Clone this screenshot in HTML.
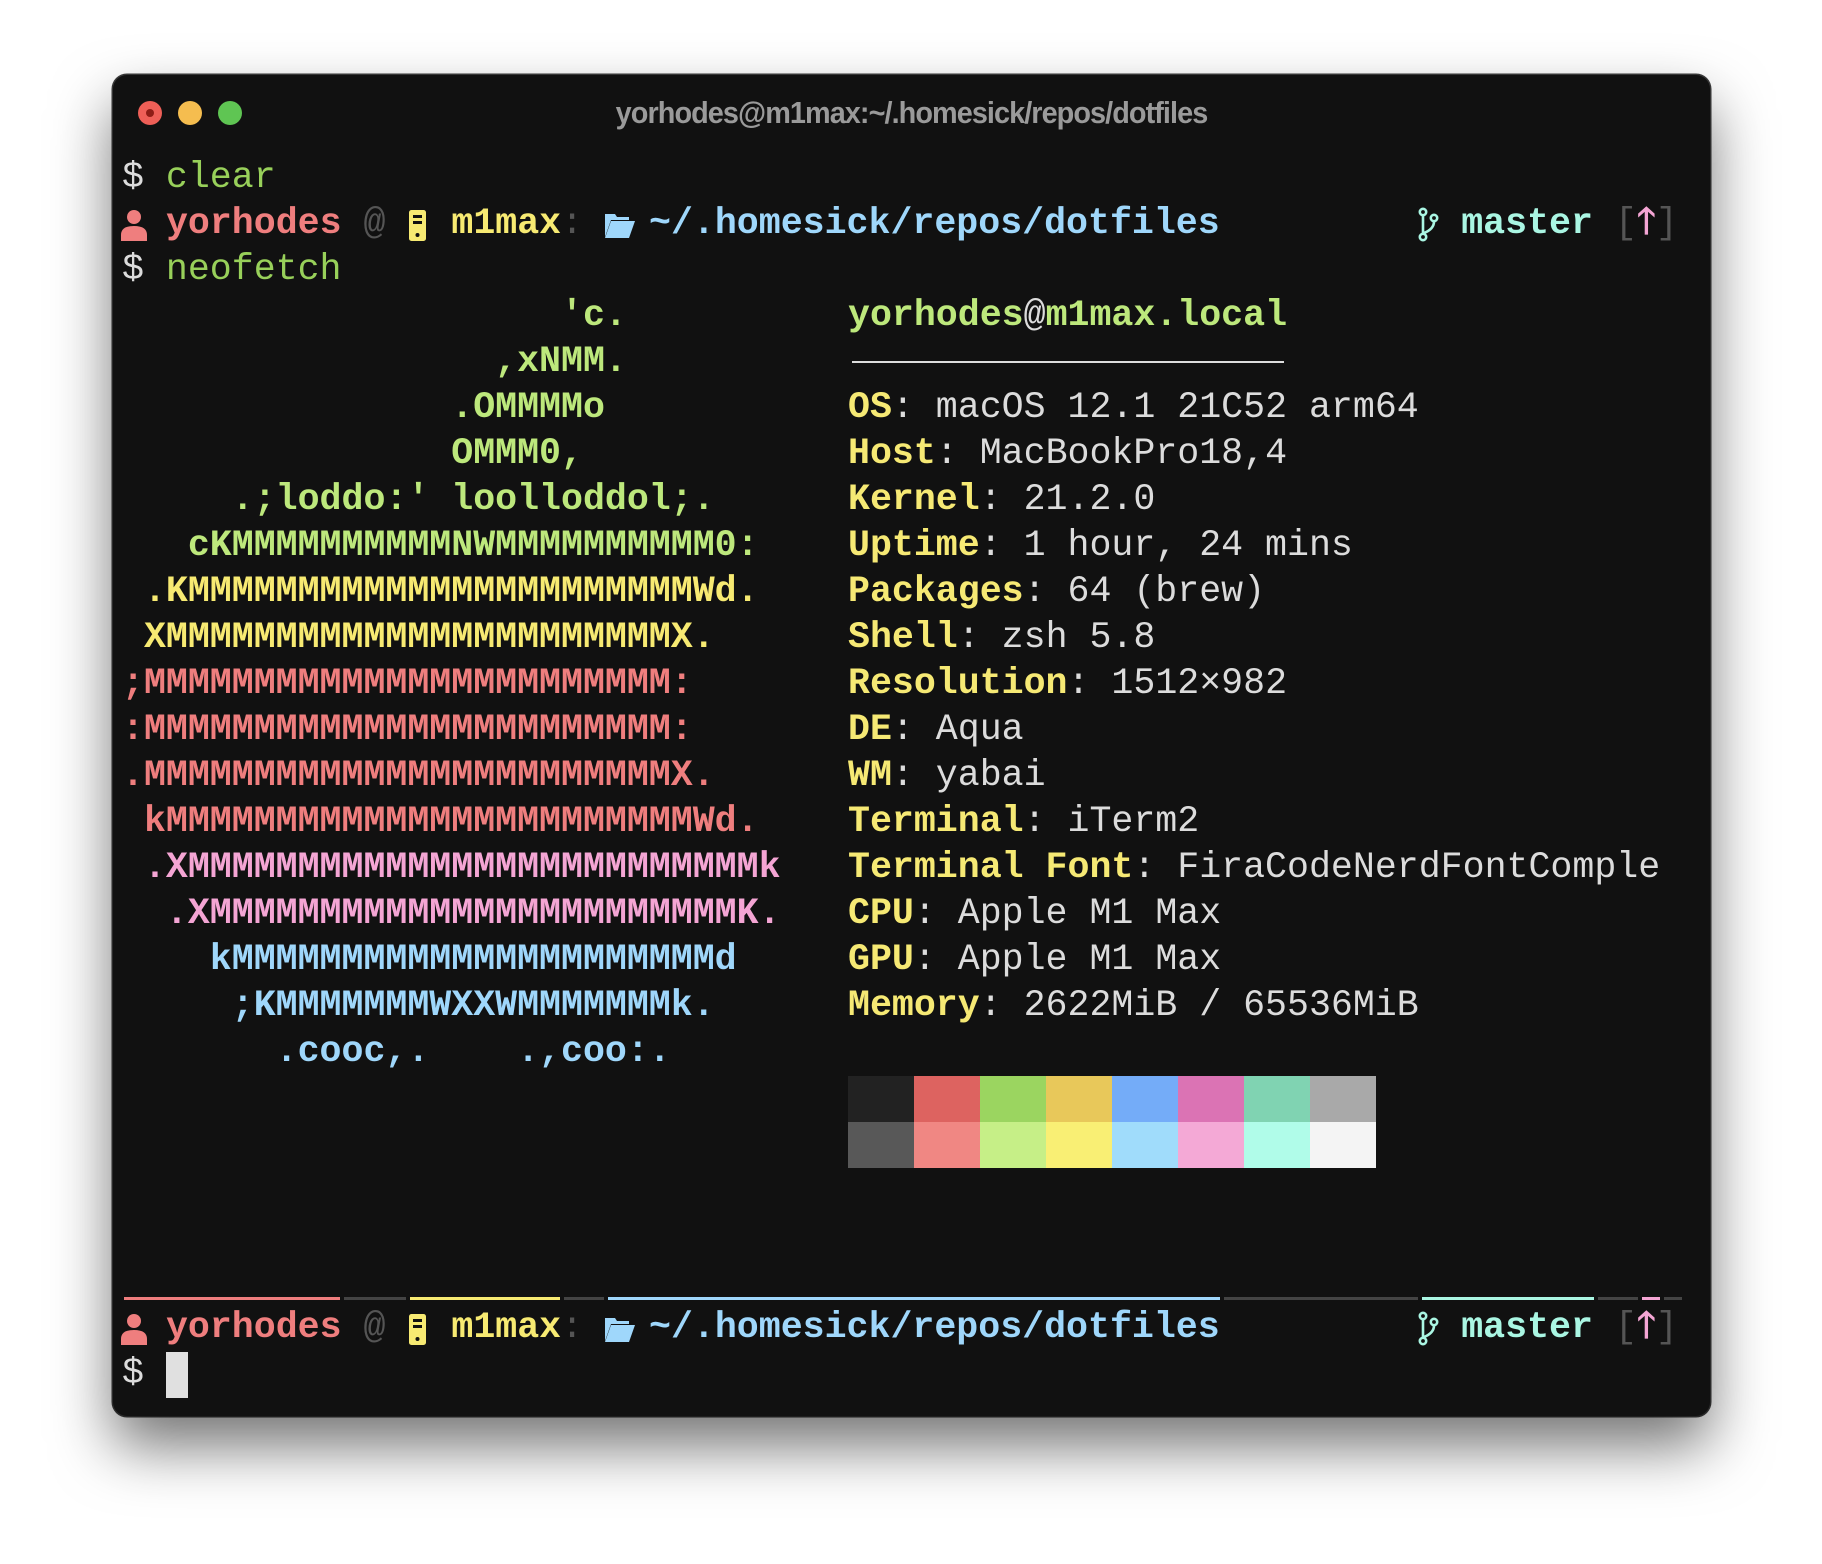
<!DOCTYPE html>
<html><head><meta charset="utf-8"><style>
html,body{margin:0;padding:0;background:#fff;width:1822px;height:1564px;overflow:hidden}
.win{position:absolute;left:113px;top:75px;width:1597px;height:1341px;background:#111111;border-radius:14px;box-shadow:0 30px 60px rgba(0,0,0,.55),0 0 0 1.5px #3a3a3a;}
.dot{position:absolute;top:101px;width:24px;height:24px;border-radius:50%}
.title{position:absolute;left:113px;width:1597px;top:95px;text-align:center;font:bold 31px "Liberation Sans",sans-serif;color:#9a9a9a;letter-spacing:-1px;transform:scaleX(.93)}
.t{position:absolute;top:155px;font-family:"Liberation Mono",monospace;font-size:36.6px;line-height:46px;color:#dcdcdc}
.t div{height:46px;white-space:pre}
b{font-weight:bold}
.g{color:#98d05a}.lg{color:#bde87c}.y{color:#f7ea72}.r{color:#ef7e7e}.p{color:#f4a5d4}.bl{color:#9fd7fb}.gr{color:#555}.cy{color:#aaf6e3}
.lb{color:#f6e974;font-weight:bold}
.ic{display:inline-block;width:22px;height:46px;vertical-align:top;position:relative}
.ic svg{position:absolute;left:0;top:0;overflow:visible}
.bar{position:absolute;top:1297px;height:3px}
.sw{position:absolute;width:66px;height:46px}
</style></head><body>
<div class="win"></div>
<div class="dot" style="left:138px;background:#ee5f57"><div style="position:absolute;left:8px;top:8px;width:8px;height:8px;border-radius:50%;background:#8e1d16"></div></div>
<div class="dot" style="left:178px;background:#f5bd4f"></div>
<div class="dot" style="left:218px;background:#5fc553"></div>
<div class="title">yorhodes@m1max:~/.homesick/repos/dotfiles</div>

<div style="position:absolute;left:852px;top:361px;width:432px;height:2px;background:#ddd"></div>

<div class="sw" style="left:848px;top:1076px;background:#222"></div>
<div class="sw" style="left:914px;top:1076px;background:#dd6360"></div>
<div class="sw" style="left:980px;top:1076px;background:#9bd560"></div>
<div class="sw" style="left:1046px;top:1076px;background:#e8c85a"></div>
<div class="sw" style="left:1112px;top:1076px;background:#74acf8"></div>
<div class="sw" style="left:1178px;top:1076px;background:#db73b4"></div>
<div class="sw" style="left:1244px;top:1076px;background:#80d3b2"></div>
<div class="sw" style="left:1310px;top:1076px;background:#a9a9a9"></div>
<div class="sw" style="left:848px;top:1122px;background:#585858"></div>
<div class="sw" style="left:914px;top:1122px;background:#f08783"></div>
<div class="sw" style="left:980px;top:1122px;background:#c6ef87"></div>
<div class="sw" style="left:1046px;top:1122px;background:#f9ef74"></div>
<div class="sw" style="left:1112px;top:1122px;background:#a0dcfb"></div>
<div class="sw" style="left:1178px;top:1122px;background:#f4a9d6"></div>
<div class="sw" style="left:1244px;top:1122px;background:#b0fce9"></div>
<div class="sw" style="left:1310px;top:1122px;background:#f4f4f4"></div>

<div class="bar" style="left:124px;width:216px;background:#ef7e7e"></div>
<div class="bar" style="left:344px;width:62px;background:#444"></div>
<div class="bar" style="left:410px;width:150px;background:#f7ea72"></div>
<div class="bar" style="left:564px;width:40px;background:#444"></div>
<div class="bar" style="left:608px;width:612px;background:#9fd7fb"></div>
<div class="bar" style="left:1224px;width:194px;background:#444"></div>
<div class="bar" style="left:1422px;width:172px;background:#aaf6e3"></div>
<div class="bar" style="left:1598px;width:40px;background:#444"></div>
<div class="bar" style="left:1642px;width:18px;background:#f4a5d4"></div>
<div class="bar" style="left:1664px;width:18px;background:#444"></div>

<div style="position:absolute;left:166px;top:1352px;width:22px;height:46px;background:#e0e0e0"></div>

<div class="t" style="left:122px">
<div>$ <span class="g">clear</span></div>
<div><span class="ic"><svg width="22" height="46" viewBox="0 0 22 46"><circle cx="12" cy="16" r="7" fill="#ef7e7e"/><path d="M-1 40 V34 Q-1 25 12 25 Q25 25 25 34 V40 Z" fill="#ef7e7e"/></svg></span> <b class="r">yorhodes</b> <span class="gr">@</span> <span class="ic"><svg width="22" height="46" viewBox="0 0 22 46"><rect x="2" y="9" width="17" height="31" rx="2.5" fill="#f7ea72"/><rect x="6" y="14" width="9" height="3" fill="#111"/><rect x="6" y="20" width="9" height="3" fill="#111"/><circle cx="10.5" cy="34" r="2" fill="#111"/></svg></span> <b class="y">m1max</b><span class="gr">:</span> <span class="ic"><svg width="22" height="46" viewBox="0 0 22 46"><path d="M0 13 H10 L12 16 H24 V19 H6 L0 36 Z" fill="#9fd7fb"/><path d="M6 20 H30 L24 37 H0 Z" fill="#9fd7fb"/></svg></span> <b class="bl">~/.homesick/repos/dotfiles</b>         <span class="ic"><svg width="22" height="46" viewBox="0 0 22 46"><g fill="none" stroke="#aaf6e3" stroke-width="2.6"><circle cx="6" cy="11" r="3.2"/><circle cx="17" cy="17" r="3.2"/><circle cx="6" cy="36" r="3.2"/><path d="M6 14.5 V32.5 M17 20.5 Q17 28 7 32"/></g></svg></span> <b class="cy">master</b> <span class="gr">[</span><b class="p">🡑</b><span class="gr">]</span></div>
<div>$ <span class="g">neofetch</span></div>
<div><b class="lg">                    'c.</b></div>
<div><b class="lg">                 ,xNMM.</b></div>
<div><b class="lg">               .OMMMMo</b></div>
<div><b class="lg">               OMMM0,</b></div>
<div><b class="lg">     .;loddo:' loolloddol;.</b></div>
<div><b class="lg">   cKMMMMMMMMMMNWMMMMMMMMMM0:</b></div>
<div><b class="y"> .KMMMMMMMMMMMMMMMMMMMMMMMWd.</b></div>
<div><b class="y"> XMMMMMMMMMMMMMMMMMMMMMMMX.</b></div>
<div><b class="r">;MMMMMMMMMMMMMMMMMMMMMMMM:</b></div>
<div><b class="r">:MMMMMMMMMMMMMMMMMMMMMMMM:</b></div>
<div><b class="r">.MMMMMMMMMMMMMMMMMMMMMMMMX.</b></div>
<div><b class="r"> kMMMMMMMMMMMMMMMMMMMMMMMMWd.</b></div>
<div><b class="p"> .XMMMMMMMMMMMMMMMMMMMMMMMMMMk</b></div>
<div><b class="p">  .XMMMMMMMMMMMMMMMMMMMMMMMMK.</b></div>
<div><b class="bl">    kMMMMMMMMMMMMMMMMMMMMMMd</b></div>
<div><b class="bl">     ;KMMMMMMMWXXWMMMMMMMk.</b></div>
<div><b class="bl">       .cooc,.    .,coo:.</b></div>
<div> </div>
<div> </div>
<div> </div>
<div> </div>
<div> </div>
<div><span class="ic"><svg width="22" height="46" viewBox="0 0 22 46"><circle cx="12" cy="16" r="7" fill="#ef7e7e"/><path d="M-1 40 V34 Q-1 25 12 25 Q25 25 25 34 V40 Z" fill="#ef7e7e"/></svg></span> <b class="r">yorhodes</b> <span class="gr">@</span> <span class="ic"><svg width="22" height="46" viewBox="0 0 22 46"><rect x="2" y="9" width="17" height="31" rx="2.5" fill="#f7ea72"/><rect x="6" y="14" width="9" height="3" fill="#111"/><rect x="6" y="20" width="9" height="3" fill="#111"/><circle cx="10.5" cy="34" r="2" fill="#111"/></svg></span> <b class="y">m1max</b><span class="gr">:</span> <span class="ic"><svg width="22" height="46" viewBox="0 0 22 46"><path d="M0 13 H10 L12 16 H24 V19 H6 L0 36 Z" fill="#9fd7fb"/><path d="M6 20 H30 L24 37 H0 Z" fill="#9fd7fb"/></svg></span> <b class="bl">~/.homesick/repos/dotfiles</b>         <span class="ic"><svg width="22" height="46" viewBox="0 0 22 46"><g fill="none" stroke="#aaf6e3" stroke-width="2.6"><circle cx="6" cy="11" r="3.2"/><circle cx="17" cy="17" r="3.2"/><circle cx="6" cy="36" r="3.2"/><path d="M6 14.5 V32.5 M17 20.5 Q17 28 7 32"/></g></svg></span> <b class="cy">master</b> <span class="gr">[</span><b class="p">🡑</b><span class="gr">]</span></div>
<div>$</div>
</div>

<div class="t" style="left:848px;top:293px">
<div><b class="lg">yorhodes</b>@<b class="lg">m1max.local</b></div>
<div> </div>
<div><span class="lb">OS</span>: macOS 12.1 21C52 arm64</div>
<div><span class="lb">Host</span>: MacBookPro18,4</div>
<div><span class="lb">Kernel</span>: 21.2.0</div>
<div><span class="lb">Uptime</span>: 1 hour, 24 mins</div>
<div><span class="lb">Packages</span>: 64 (brew)</div>
<div><span class="lb">Shell</span>: zsh 5.8</div>
<div><span class="lb">Resolution</span>: 1512×982</div>
<div><span class="lb">DE</span>: Aqua</div>
<div><span class="lb">WM</span>: yabai</div>
<div><span class="lb">Terminal</span>: iTerm2</div>
<div><span class="lb">Terminal Font</span>: FiraCodeNerdFontComple</div>
<div><span class="lb">CPU</span>: Apple M1 Max</div>
<div><span class="lb">GPU</span>: Apple M1 Max</div>
<div><span class="lb">Memory</span>: 2622MiB / 65536MiB</div>
</div>
</body></html>
